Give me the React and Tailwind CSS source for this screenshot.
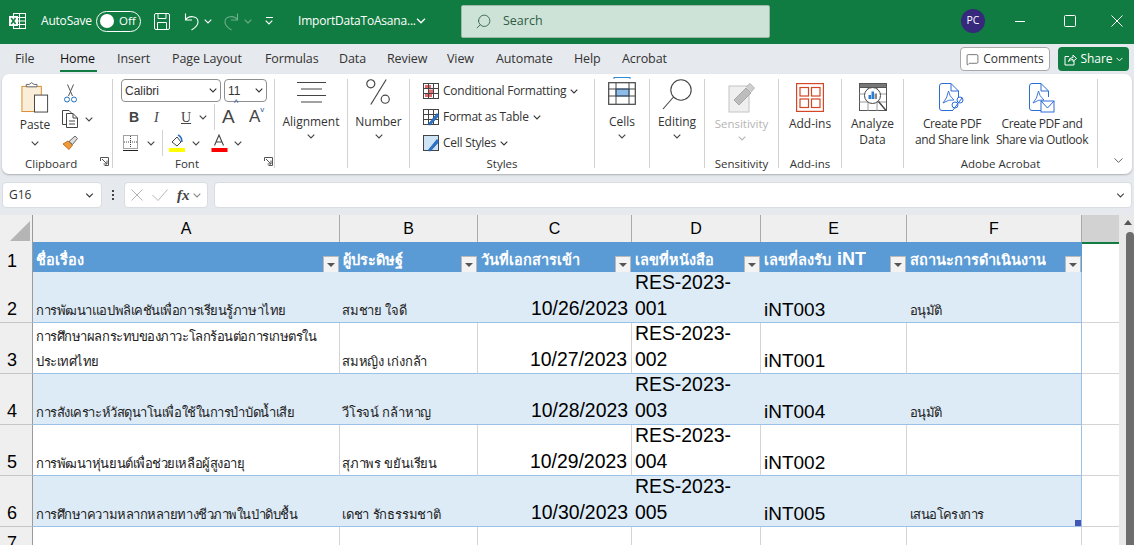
import { Search, ChevronDown, MessageSquare } from "lucide-react";

const UI = "font-['Open_Sans','Noto_Sans',sans-serif]";

const Chev = ({ className = "" }) => (
  <svg width="8" height="5" viewBox="0 0 8 5" fill="none" stroke="currentColor" strokeWidth="1.1" className={className}>
    <path d="M0.7 0.7 L4 4 L7.3 0.7" />
  </svg>
);

const Launcher = () => (
  <svg width="9" height="9" viewBox="0 0 9 9" fill="none" stroke="#555" strokeWidth="1">
    <path d="M0.5 4 V0.5 H8.5 V8.5 H4.5" />
    <path d="M2 2 L7 7 M7 3.5 V7 H3.5" />
  </svg>
);

const ExcelLogo = () => (
  <svg width="17" height="18" viewBox="0 0 17 18" fill="none" stroke="white" strokeWidth="1">
    <rect x="4.5" y="1.5" width="12" height="15" />
    <path d="M4.5 5.5 H16.5 M4.5 9 H16.5 M4.5 12.5 H16.5 M10.5 1.5 V16.5" />
    <rect x="0" y="4" width="9" height="10" fill="white" stroke="none" />
    <path d="M2.2 6 L6.6 12 M6.6 6 L2.2 12" stroke="#107c41" strokeWidth="1.5" />
  </svg>
);

const SaveIcon = () => (
  <svg width="16" height="17" viewBox="0 0 16 17" fill="none" stroke="white" strokeWidth="1">
    <rect x="0.5" y="0.5" width="15" height="16" rx="1.5" />
    <path d="M4 0.5 V5.5 H12 V0.5 M3.5 16.5 V9.5 H12.5 V16.5" />
  </svg>
);

const UndoIcon = ({ className = "" }) => (
  <svg width="15" height="19" viewBox="0 0 15 19" fill="none" stroke="currentColor" strokeWidth="1.1" className={className}>
    <path d="M1.5 1.5 V8 H8 M1.5 8 C4 3.5 14 3 14 10 C14 14 11 16 7.5 18" />
  </svg>
);

const ScissorsIcon = () => (
  <svg width="13" height="19" viewBox="0 0 13 19" fill="none" strokeWidth="1">
    <path d="M3.5 0.5 L8.5 12 M9.5 0.5 L4.5 12" stroke="#555" />
    <circle cx="3" cy="15.5" r="2.5" stroke="#1f6fc4" />
    <circle cx="10" cy="15.5" r="2.5" stroke="#1f6fc4" />
  </svg>
);

const CopyIcon = () => (
  <svg width="16" height="18" viewBox="0 0 16 18" fill="none" stroke="#444" strokeWidth="1">
    <path d="M5 14.5 H0.5 V0.5 H7 L9 2.5 V3" />
    <path d="M4.5 3.5 H11 L15.5 8 V17.5 H4.5 Z" fill="white" />
    <path d="M11 3.5 V8 H15.5 M7 11 H13 M7 14 H13" />
  </svg>
);

const PasteIcon = () => (
  <svg width="28" height="31" viewBox="0 0 28 32" fill="none">
    <rect x="0.5" y="4.5" width="20" height="26" fill="#fbeed8" stroke="#d98a2b" />
    <path d="M5 5 H16 V2.5 H13 L10.5 0.7 L8 2.5 H5 Z" fill="white" stroke="#666" />
    <rect x="13.5" y="13.5" width="13.5" height="17.5" fill="white" stroke="#444" />
  </svg>
);

const PainterIcon = () => (
  <svg width="17" height="17" viewBox="0 0 17 17" fill="none">
    <path d="M1 9 L7 14.5 L10.5 10 L6 6 Z" fill="#ed9a3c" stroke="#c9701a" />
    <path d="M7 6.5 L13 1 L15.5 3.5 L10.5 9.5 Z" fill="#dcdcdc" stroke="#666" />
  </svg>
);

const BordersIcon = () => (
  <svg width="15" height="16" viewBox="0 0 15 16" fill="none" stroke="#444" strokeWidth="1" strokeDasharray="1 1">
    <rect x="0.5" y="0.5" width="14" height="13" />
    <path d="M7.5 1 V13 M1 7 H14" />
    <path d="M0 15.5 H15" strokeDasharray="none" stroke="#222" />
  </svg>
);

const FillIcon = () => (
  <svg width="17" height="18" viewBox="0 0 17 18" fill="none">
    <path d="M3 8 L8 3 L12 8 L8 12 Z" fill="white" stroke="#444" />
    <path d="M9 1 Q13 3 13 8" stroke="#2c72c7" strokeWidth="1.6" />
    <rect x="0" y="14" width="16" height="4" fill="#ffff00" />
  </svg>
);

const FontColorIcon = () => (
  <svg width="17" height="18" viewBox="0 0 17 18" fill="none" stroke="#444" strokeWidth="1.1">
    <path d="M3.5 11.5 L8 1 L12.5 11.5 M5 8 H11" />
    <rect x="0.5" y="14" width="16" height="4" fill="#ff0000" stroke="none" />
  </svg>
);

const AlignIcon = () => (
  <svg width="29" height="24" viewBox="0 0 29 24" fill="none" stroke="#444" strokeWidth="1">
    <path d="M0 1.5 H29 M4 8 H25 M0 14.5 H29 M4 21 H25" />
  </svg>
);

const PercentIcon = () => (
  <svg width="25" height="26" viewBox="0 0 26 27" fill="none" stroke="#444" strokeWidth="1.2">
    <circle cx="5" cy="5" r="4.2" />
    <circle cx="20" cy="21" r="4.2" />
    <path d="M21 0.5 L5 26.5" />
  </svg>
);

const CondFmtIcon = () => (
  <svg width="16" height="16" viewBox="0 0 16 16" fill="none" stroke="#444" strokeWidth="1">
    <rect x="0.5" y="0.5" width="15" height="15" fill="white" />
    <rect x="2" y="2" width="6" height="3.5" fill="#e8696b" stroke="none" />
    <rect x="5" y="6.5" width="5.5" height="3.5" fill="#e8696b" stroke="none" />
    <rect x="2" y="11" width="7" height="3" fill="#e8696b" stroke="none" />
    <path d="M5.5 0.5 V15.5 M10.5 0.5 V15.5 M0.5 5.5 H15.5 M0.5 10.5 H15.5" />
  </svg>
);

const TableIcon = ({ fill = false }) => (
  <svg width="16" height="17" viewBox="0 0 16 17" fill="none" stroke="#444" strokeWidth="1">
    <rect x="0.5" y="0.5" width="15" height="15" fill={fill ? "#cfe3f6" : "white"} />
    {!fill && <path d="M0.5 5.5 H15.5 M0.5 10.5 H15.5 M5.5 0.5 V15.5 M10.5 0.5 V15.5" />}
    <path d="M5 15.5 L14 4.5 L16 6.5 L7.5 16 Z" fill="#2c72c7" stroke="#1f5aa6" strokeWidth="0.7" />
  </svg>
);

const CellsIcon = () => (
  <svg width="28" height="28" viewBox="0 0 28 28" fill="none">
    <path d="M6 0.5 H22 M6 0 V2 M22 0 V2" stroke="#2c8ad6" />
    <rect x="0.7" y="5.7" width="26.6" height="21.6" stroke="#444" strokeWidth="1.2" />
    <rect x="8" y="12" width="13" height="7" fill="#8dbce9" stroke="#2b6bb0" />
    <path d="M0.7 12 H27 M0.7 19 H27 M8 6 V27 M21 6 V27" stroke="#444" />
  </svg>
);

const MagnifierIcon = () => (
  <svg width="30" height="31" viewBox="0 0 30 31" fill="none" stroke="#444" strokeWidth="1.1">
    <circle cx="19" cy="11" r="10.2" />
    <path d="M11.5 18 L1 30" />
  </svg>
);

const SensitivityIcon = () => (
  <svg width="27" height="30" viewBox="0 0 27 30" fill="none">
    <rect x="1" y="3" width="20" height="26" fill="#efefef" stroke="#c4c4c4" />
    <path d="M6 17 L18 5 L23 10 L11 22 Z" fill="#bdbdbd" stroke="#a8a8a8" />
    <path d="M18 4 L22 0.5 L26.5 5 L23 9" fill="#cfcfcf" stroke="#b5b5b5" />
  </svg>
);

const AddinsIcon = () => (
  <svg width="28" height="29" viewBox="0 0 28 29" fill="none" stroke="#d24726" strokeWidth="1.2">
    <rect x="0.6" y="0.6" width="26.8" height="27.8" />
    <rect x="4" y="4.5" width="8.5" height="8.5" />
    <rect x="15.5" y="4.5" width="8.5" height="8.5" />
    <rect x="4" y="16" width="8.5" height="8.5" />
    <rect x="15.5" y="16" width="8.5" height="8.5" />
  </svg>
);

const AnalyzeIcon = () => (
  <svg width="28" height="29" viewBox="0 0 28 29" fill="none" stroke="#555" strokeWidth="1">
    <rect x="0.5" y="0.5" width="27" height="27" fill="white" />
    <rect x="0.5" y="0.5" width="27" height="4" fill="#777" />
    <path d="M0.5 11 H27 M0.5 19 H27 M9 5 V28 M18 5 V28" stroke="#999" />
    <circle cx="13.5" cy="12.5" r="8" fill="white" stroke="#444" />
    <rect x="9.5" y="12" width="2.5" height="4" fill="#2b7cd3" stroke="none" />
    <rect x="12.5" y="8.5" width="2.5" height="7.5" fill="#2b7cd3" stroke="none" />
    <rect x="15.5" y="10.5" width="2.5" height="5.5" fill="#888" stroke="none" />
    <path d="M19.5 18.5 L27 27.5" stroke="#444" strokeWidth="1.4" />
  </svg>
);

const PdfBase = ({ children }) => (
  <svg width="26" height="31" viewBox="0 0 26 31" fill="none" stroke="#2c6cd6" strokeWidth="1">
    <path d="M14 27.5 H3 Q0.5 27.5 0.5 25 V3 Q0.5 0.5 3 0.5 H12 L19.5 8 V14" fill="white" />
    <path d="M12 0.5 V8 H19.5" />
    <path d="M4 20 Q8 16 9.5 8 Q10 13 15 17 Q10 16 4 20 Z" strokeWidth="0.9" />
    {children}
  </svg>
);

const BigLabel = ({ children, className = "" }) => (
  <span className={`text-center leading-[16px] text-[12px] text-[#333] ${className}`}>{children}</span>
);

// Alignment, Number, Cells, Editing: icon, label, chevron
const DropGroup = ({ width, icon, label, iconH }) => (
  <div className={`${width} h-full border-r border-[#d2d2d2] flex flex-col items-center`}>
    <div className={`${iconH} flex items-end justify-center`}>{icon}</div>
    <BigLabel className="mt-[9px]">{label}</BigLabel>
    <Chev className="mt-[4px] text-[#444]" />
  </div>
);

const GroupLabel = ({ children, className = "" }) => (
  <div className={`mt-auto h-[14px] mb-[-3px] text-[11.5px] leading-[14px] text-center text-[#333] ${className}`}>{children}</div>
);

const FilterBtn = () => (
  <span className="w-[16px] h-[17px] bg-[#f3f3f3] border border-[#b9b9b9] flex items-center justify-center shrink-0">
    <span className="w-0 h-0 border-l-[4px] border-r-[4px] border-t-[4px] border-l-transparent border-r-transparent border-t-[#555]" />
  </span>
);

const HEAD = [
  "ชื่อเรื่อง",
  "ผู้ประดิษฐ์",
  "วันที่เอกสารเข้า",
  "เลขที่หนังสือ",
  <>เลขที่ลงรับ <span className="text-[18px] leading-[20px] ml-[2px]">iNT</span></>,
  "สถานะการดำเนินงาน",
];

const ROWS = [
  { n: 2, title: ["การพัฒนาแอปพลิเคชันเพื่อการเรียนรู้ภาษาไทย"], who: "สมชาย ใจดี", date: "10/26/2023", doc: "001", recv: "iNT003", status: "อนุมัติ" },
  { n: 3, title: ["การศึกษาผลกระทบของภาวะโลกร้อนต่อการเกษตรใน", "ประเทศไทย"], who: "สมหญิง เก่งกล้า", date: "10/27/2023", doc: "002", recv: "iNT001", status: "" },
  { n: 4, title: ["การสังเคราะห์วัสดุนาโนเพื่อใช้ในการบำบัดน้ำเสีย"], who: "วีโรจน์ กล้าหาญ", date: "10/28/2023", doc: "003", recv: "iNT004", status: "อนุมัติ" },
  { n: 5, title: ["การพัฒนาหุ่นยนต์เพื่อช่วยเหลือผู้สูงอายุ"], who: "สุภาพร ขยันเรียน", date: "10/29/2023", doc: "004", recv: "iNT002", status: "" },
  { n: 6, title: ["การศึกษาความหลากหลายทางชีวภาพในป่าดิบชื้น"], who: "เดชา รักธรรมชาติ", date: "10/30/2023", doc: "005", recv: "iNT005", status: "เสนอโครงการ" },
];

const GRID = "grid grid-cols-[33px_307px_138px_154px_129px_146px_175px_37px]";

export default function App() {
  return (
    <div className={`h-screen w-full overflow-hidden flex flex-col bg-[#e6e9ed] ${UI}`}>
      {/* title bar */}
      <div className="h-[44px] shrink-0 bg-[#107c41] text-white flex items-center text-[12px] pl-[9px] pb-[2px]">
        <ExcelLogo />
        <span className="ml-[15px] w-[55px] tracking-[-0.2px]">AutoSave</span>
        <span className="w-[45px] h-[21px] rounded-full border border-white flex items-center pl-[3px] gap-[5px]">
          <span className="w-[14px] h-[14px] rounded-full bg-white" />
          <span className="text-[11.5px]">Off</span>
        </span>
        <span className="ml-[13px]"><SaveIcon /></span>
        <UndoIcon className="ml-[14px]" />
        <Chev className="ml-[5px]" />
        <UndoIcon className="ml-[12px] -scale-x-100 text-[#6fae8c]" />
        <Chev className="ml-[5px] text-[#6fae8c]" />
        <span className="ml-[13px] flex flex-col gap-[2px] items-center">
          <span className="w-[7px] h-px bg-white" />
          <Chev />
        </span>
        <span className="ml-[25px] w-[115px] whitespace-nowrap tracking-[-0.2px]">ImportDataToAsana...</span>
        <Chev className="ml-[3px] w-[10px] h-[6px]" />
        <div className="ml-[35px] w-[309px] h-[33px] bg-[#cee3d7] border border-[#9db8a9] rounded-[2px] flex items-center pl-[13px] text-[#2f5c44]">
          <Search size={17} strokeWidth={1.2} className="-scale-x-100" />
          <span className="ml-[11px] text-[12.5px]">Search</span>
        </div>
        <span className="ml-[191px] w-[24px] h-[24px] rounded-full bg-[#36287b] flex items-center justify-center text-[10.5px]">PC</span>
        <svg width="10" height="1" viewBox="0 0 10 1" className="ml-[30px]"><rect width="10" height="1" fill="white" /></svg>
        <svg width="12" height="12" viewBox="0 0 12 12" fill="none" stroke="white" className="ml-[39px]"><rect x="0.5" y="0.5" width="11" height="11" rx="1" /></svg>
        <svg width="12" height="12" viewBox="0 0 12 12" fill="none" stroke="white" className="ml-[35px]"><path d="M0.5 0.5 L11.5 11.5 M11.5 0.5 L0.5 11.5" /></svg>
      </div>

      {/* tabs */}
      <div className="h-[30px] shrink-0 flex items-center pl-[15px] text-[12.5px] text-[#333] tracking-[-0.1px]">
        <span className="w-[45px]">File</span>
        <span className="w-[57px] relative font-medium text-[#111]">
          Home
          <span className="absolute left-0 w-[37px] top-[20px] h-[2px] bg-[#107c41]" />
        </span>
        <span className="w-[55px]">Insert</span>
        <span className="w-[93px]">Page Layout</span>
        <span className="w-[74px]">Formulas</span>
        <span className="w-[48px]">Data</span>
        <span className="w-[60px]">Review</span>
        <span className="w-[49px]">View</span>
        <span className="w-[78px]">Automate</span>
        <span className="w-[48px]">Help</span>
        <span className="w-[338px]">Acrobat</span>
        <span className="w-[90px] h-[24px] bg-white border border-[#a8a8a8] rounded-[4px] flex items-center justify-center gap-[4px] text-[12px]">
          <MessageSquare size={13} strokeWidth={1.2} />
          Comments
        </span>
        <span className="ml-[8px] w-[71px] h-[24px] bg-[#107c41] text-white rounded-[4px] flex items-center justify-center gap-[4px] text-[12px]">
          <svg width="13" height="13" viewBox="0 0 13 13" fill="none" stroke="white" strokeWidth="1">
            <path d="M5 3.5 H1 V12 H10 V8 M4.5 8.5 Q5 4.5 9 4.5 V2 L12.5 5.5 L9 8.5 V6.5 Q6 6.5 4.5 8.5 Z" />
          </svg>
          Share
          <Chev className="w-[7px]" />
        </span>
      </div>

      {/* ribbon */}
      <div className="h-[100px] shrink-0 mx-[2px] bg-white rounded-[7px] shadow-[0_1px_2px_rgba(0,0,0,0.25)] flex pt-[5px] pb-[6px] relative">
        {/* Clipboard */}
        <div className="w-[111px] h-full border-r border-[#d2d2d2] flex flex-col">
          <div className="flex pl-[16px] pt-[3px]">
            <div className="w-[34px] flex flex-col items-center">
              <PasteIcon />
              <BigLabel className="mt-[4px]">Paste</BigLabel>
              <Chev className="mt-[8px] text-[#444]" />
            </div>
            <div className="ml-[10px] flex flex-col gap-[7px] text-[#444] pt-[2px]">
              <span className="pl-[2px]"><ScissorsIcon /></span>
              <div className="flex items-center gap-[7px]">
                <CopyIcon />
                <Chev />
              </div>
              <PainterIcon />
            </div>
          </div>
          <div className="mt-auto h-[14px] mb-[-3px] flex text-[11.5px] leading-[14px] text-[#333]">
            <span className="ml-[23px] w-[75px]">Clipboard</span>
            <Launcher />
          </div>
        </div>

        {/* Font */}
        <div className="w-[162px] h-full border-r border-[#d2d2d2] flex flex-col pl-[8px]">
          <div className="flex gap-[3px] font-['Liberation_Sans',sans-serif] text-[12px] text-[#333]">
            <span className="w-[100px] h-[23px] border border-[#8f8f8f] rounded-[4px] flex items-center justify-between px-[3px]">Calibri<Chev /></span>
            <span className="w-[43px] h-[23px] border border-[#8f8f8f] rounded-[4px] flex items-center justify-between px-[3px]">11<Chev /></span>
          </div>
          <div className="h-[28px] flex items-center text-[#444] text-[14px] mt-[1px] pl-[8px] font-['Liberation_Serif',serif]">
            <span className="w-[25px] font-bold font-['Liberation_Sans',sans-serif]">B</span>
            <span className="w-[27px] italic">I</span>
            <span className="w-[13px] underline">U</span>
            <Chev className="ml-[5px]" />
            <span className="ml-[7px] w-px h-[26px] bg-[#d2d2d2]" />
            <span className="ml-[7px] w-[27px] text-[19px] font-['Liberation_Sans',sans-serif] font-light relative">A<sup className="absolute text-[9px] top-[0px] left-[12px] text-[#1f5aa6]">^</sup></span>
            <span className="text-[17px] font-['Liberation_Sans',sans-serif]">A<span className="text-[8px] text-[#1f5aa6] align-top">v</span></span>
          </div>
          <div className="h-[24px] flex items-center text-[#444] pl-[2px]">
            <BordersIcon />
            <Chev className="ml-[9px]" />
            <span className="ml-[7px] w-px h-[26px] bg-[#d2d2d2]" />
            <span className="ml-[6px]"><FillIcon /></span>
            <Chev className="ml-[6px]" />
            <span className="ml-[11px]"><FontColorIcon /></span>
            <Chev className="ml-[6px]" />
          </div>
          <div className="mt-auto h-[14px] mb-[-3px] flex text-[11.5px] leading-[14px] text-[#333]">
            <span className="w-[131px] text-center pl-[1px]">Font</span>
            <span className="ml-[12px]"><Launcher /></span>
          </div>
        </div>

        <DropGroup width="w-[73px]" iconH="h-[26px]" icon={<AlignIcon />} label="Alignment" />
        <DropGroup width="w-[62px]" iconH="h-[26px]" icon={<PercentIcon />} label="Number" />

        {/* Styles */}
        <div className="w-[185px] h-full border-r border-[#d2d2d2] flex flex-col pl-[13px] text-[12px] text-[#333]">
          <div className="flex flex-col gap-[8px] pt-[3px] whitespace-nowrap tracking-[-0.25px]">
            <div className="h-[18px] flex items-center gap-[4px]"><CondFmtIcon />Conditional Formatting<Chev /></div>
            <div className="h-[18px] flex items-center gap-[4px]"><TableIcon />Format as Table<Chev /></div>
            <div className="h-[18px] flex items-center gap-[4px]"><TableIcon fill />Cell Styles<Chev /></div>
          </div>
          <GroupLabel className="-ml-[13px]">Styles</GroupLabel>
        </div>

        <DropGroup width="w-[55px]" iconH="h-[26px]" icon={<CellsIcon />} label="Cells" />
        <DropGroup width="w-[55px]" iconH="h-[31px] -mb-[5px]" icon={<MagnifierIcon />} label="Editing" />

        {/* Sensitivity */}
        <div className="w-[74px] h-full border-r border-[#d2d2d2] flex flex-col items-center pt-[4px]">
          <SensitivityIcon />
          <BigLabel className="mt-[3px] !text-[#b5b5b5] !text-[11.5px]">Sensitivity</BigLabel>
          <Chev className="mt-[4px] text-[#b5b5b5]" />
          <GroupLabel>Sensitivity</GroupLabel>
        </div>

        {/* Add-ins */}
        <div className="w-[63px] h-full border-r border-[#d2d2d2] flex flex-col items-center pt-[4px]">
          <AddinsIcon />
          <BigLabel className="mt-[4px]">Add-ins</BigLabel>
          <GroupLabel>Add-ins</GroupLabel>
        </div>

        {/* Analyze */}
        <div className="w-[62px] h-full border-r border-[#d2d2d2] flex flex-col items-center pt-[4px]">
          <AnalyzeIcon />
          <BigLabel className="mt-[4px]">Analyze<br />Data</BigLabel>
        </div>

        {/* Acrobat */}
        <div className="w-[194px] h-full border-r border-[#d2d2d2] flex flex-col">
          <div className="flex pt-[4px] pl-[4px] tracking-[-0.4px]">
            <div className="w-[88px] flex flex-col items-center">
              <PdfBase>
                <circle cx="16" cy="22" r="3" />
                <circle cx="21" cy="17" r="3" />
                <path d="M14 27 L23 15" />
              </PdfBase>
              <BigLabel className="whitespace-nowrap mt-[2px]">Create PDF<br />and Share link</BigLabel>
            </div>
            <div className="w-[92px] flex flex-col items-center">
              <PdfBase>
                <rect x="12" y="18" width="13" height="11" fill="white" />
                <path d="M12 18 L18.5 25 L25 18" />
              </PdfBase>
              <BigLabel className="whitespace-nowrap mt-[2px]">Create PDF and<br />Share via Outlook</BigLabel>
            </div>
          </div>
          <GroupLabel>Adobe Acrobat</GroupLabel>
        </div>

        <ChevronDown size={15} strokeWidth={1.2} className="absolute right-[6px] bottom-[6px] text-[#333]" />
      </div>

      {/* formula bar */}
      <div className="h-[26px] mt-[8px] shrink-0 flex px-[2px] text-[12px] text-[#333]">
        <div className="w-[100px] bg-white rounded-[4px] border border-[#d9dce0] flex items-center justify-between pl-[6px] pr-[7px]">
          G16
          <Chev className="w-[9px]" />
        </div>
        <span className="w-[22px] flex flex-col gap-[2px] items-center justify-center">
          <span className="w-[2px] h-[2px] bg-[#444]" />
          <span className="w-[2px] h-[2px] bg-[#444]" />
          <span className="w-[2px] h-[2px] bg-[#444]" />
        </span>
        <div className="w-[84px] bg-white rounded-[4px] border border-[#d9dce0] flex items-center pl-[6px] text-[#b5b5b5]">
          <svg width="12" height="12" viewBox="0 0 12 12" fill="none" stroke="currentColor"><path d="M0.5 0.5 L11.5 11.5 M11.5 0.5 L0.5 11.5" /></svg>
          <svg width="16" height="12" viewBox="0 0 16 12" fill="none" stroke="currentColor" className="ml-[9px]"><path d="M0.5 6 L6 11.5 L15.5 0.5" /></svg>
          <span className="ml-[9px] font-['Liberation_Serif',serif] italic font-bold text-[15px] text-[#444]">fx</span>
          <Chev className="ml-[3px] text-[#888]" />
        </div>
        <div className="ml-[6px] flex-1 bg-white rounded-[4px] border border-[#d9dce0] flex items-center justify-end pr-[6px]">
          <Chev className="w-[9px] text-[#444]" />
        </div>
      </div>

      {/* sheet */}
      <div className="mt-[7px] flex-1 min-h-0 flex">
        <div className="w-[1119px] flex flex-col font-['Liberation_Sans',sans-serif] bg-white">
          {/* column headers */}
          <div className={`${GRID} h-[27px] shrink-0 bg-[#efefef] text-[16px] text-black text-center leading-[28px]`}>
            <div className="border-r border-[#9b9b9b] border-b flex items-end justify-end pr-[2px] pb-[2px]">
              <span className="w-0 h-0 border-l-[20px] border-b-[20px] border-l-transparent border-b-[#b5b5b5]" />
            </div>
            {["A", "B", "C", "D", "E", "F"].map((c) => (
              <div key={c} className="border-r border-b border-r-[#aaaaaa] border-b-[#9b9b9b]">{c}</div>
            ))}
            <div className="bg-[#d2d2d2] border-b-2 border-[#107c41]" />
          </div>

          {/* header row */}
          <div className={`${GRID} h-[30px] shrink-0`}>
            <div className="bg-[#efefef] border-r border-[#9b9b9b] text-[18px] flex items-center pt-[6px] pl-[7px] text-black">1</div>
            {HEAD.map((h, i) => (
              <div key={i} className="bg-[#5b9bd5] text-white font-bold text-[14.5px] flex items-center justify-between pl-[3px] pr-[1px] pt-[5px] border-b border-[#9bc2e6]">
                <span className="whitespace-nowrap overflow-hidden">{h}</span>
                <span className="self-end mb-px"><FilterBtn /></span>
              </div>
            ))}
            <div className="border-b border-[#d4d4d4]" />
          </div>

          {/* data rows */}
          {ROWS.map((r) => {
            const band = r.n % 2 === 0;
            const cell = `border-b px-[3px] overflow-hidden flex flex-col justify-end ${band ? "bg-[#ddebf7] border-b-[#9bc2e6]" : "bg-white border-b-[#9bc2e6] border-r border-r-[#d4d4d4]"}`;
            return (
              <div key={r.n} className={`${GRID} h-[51px] shrink-0`}>
                <div className="bg-[#efefef] border-r border-b border-r-[#9b9b9b] border-b-[#c6c6c6] text-[18px] leading-[24px] flex items-end pl-[7px] pb-[1px] text-black">{r.n}</div>
                <div className={`${cell} text-[13px] leading-[25px] tracking-[-0.45px] text-[#222]`}>
                  {r.title.map((t) => <div key={t} className="whitespace-nowrap translate-y-[1px]">{t}</div>)}
                </div>
                <div className={`${cell} !pl-[2px] text-[13px] leading-[25px] tracking-[-0.2px] text-[#222] whitespace-nowrap`}>
                  <div className="translate-y-[1px]">{r.who}</div>
                </div>
                <div className={`${cell} text-[19.4px] leading-[25px] text-right pb-[1px] !pr-[4px] text-black`}>{r.date}</div>
                <div className={`${cell} text-[19.4px] leading-[26px] pb-[1px] text-black`}>
                  <div className="whitespace-nowrap">RES-2023-</div>
                  <div>{r.doc}</div>
                </div>
                <div className={`${cell} text-[19px] leading-[25px] text-black`}>{r.recv}</div>
                <div className={`${cell} text-[13px] leading-[25px] tracking-[-0.6px] text-[#222] relative !border-r !border-r-[#9bc2e6]`}>
                  <div className="translate-y-[1px]">{r.status}</div>
                  {r.n === 6 && <span className="absolute right-0 bottom-0 w-[6px] h-[6px] bg-[#4355b5]" />}
                </div>
                <div className="border-b border-[#d4d4d4] bg-white" />
              </div>
            );
          })}

          {/* row 7 */}
          <div className={`${GRID} flex-1`}>
            <div className="bg-[#efefef] border-r border-[#9b9b9b] text-[18px] flex items-start pl-[7px] pt-[3px] text-black">7</div>
            {[0, 1, 2, 3, 4, 5].map((i) => (
              <div key={i} className="border-r border-[#d4d4d4]" />
            ))}
            <div />
          </div>
        </div>

        {/* scrollbar */}
        <div className="w-[15px] bg-[#e9e9e9] flex flex-col items-end relative">
          <span className="mt-[5px] mr-[2px] w-0 h-0 border-l-[4px] border-r-[4px] border-b-[5px] border-l-transparent border-r-transparent border-b-[#555]" />
          <span className="mt-[7px] w-[8px] flex-1 bg-[#6d6d6d] rounded-t-[4px]" />
        </div>
      </div>
    </div>
  );
}
